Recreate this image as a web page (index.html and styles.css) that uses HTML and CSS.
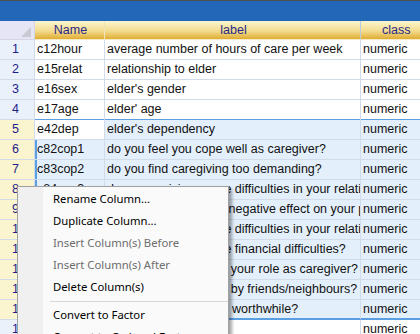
FILE: index.html
```html
<!DOCTYPE html>
<html>
<head>
<meta charset="utf-8">
<link rel="stylesheet" href="styles.css">
</head>
<body>
<div class="topbar"></div>
<div class="sheet">
  <div class="row head">
    <div class="cell num corner"><span class="tri"></span></div>
    <div class="cell name">Name</div>
    <div class="cell label">label</div>
    <div class="cell cls">class</div>
  </div>
  <div class="row"><div class="cell num">1</div><div class="cell name">c12hour</div><div class="cell label">average number of hours of care per week</div><div class="cell cls">numeric</div></div>
  <div class="row"><div class="cell num">2</div><div class="cell name">e15relat</div><div class="cell label">relationship to elder</div><div class="cell cls">numeric</div></div>
  <div class="row"><div class="cell num">3</div><div class="cell name">e16sex</div><div class="cell label">elder's gender</div><div class="cell cls">numeric</div></div>
  <div class="row"><div class="cell num">4</div><div class="cell name">e17age</div><div class="cell label">elder' age</div><div class="cell cls">numeric</div></div>
  <div class="row sel first"><div class="cell num">5</div><div class="cell name active">e42dep</div><div class="cell label">elder's dependency</div><div class="cell cls">numeric</div></div>
  <div class="row sel"><div class="cell num">6</div><div class="cell name">c82cop1</div><div class="cell label">do you feel you cope well as caregiver?</div><div class="cell cls">numeric</div></div>
  <div class="row sel"><div class="cell num">7</div><div class="cell name">c83cop2</div><div class="cell label">do you find caregiving too demanding?</div><div class="cell cls">numeric</div></div>
  <div class="row sel"><div class="cell num">8</div><div class="cell name">c84cop3</div><div class="cell label">does caregiving cause difficulties in your relationship with your friends?</div><div class="cell cls">numeric</div></div>
  <div class="row sel"><div class="cell num">9</div><div class="cell name">c85cop4</div><div class="cell label">does caregiving have negative effect on your physical health?</div><div class="cell cls">numeric</div></div>
  <div class="row sel"><div class="cell num">10</div><div class="cell name">c86cop5</div><div class="cell label">does caregiving cause difficulties in your relationship with your family?</div><div class="cell cls">numeric</div></div>
  <div class="row sel"><div class="cell num">11</div><div class="cell name">c87cop6</div><div class="cell label">does caregiving cause financial difficulties?</div><div class="cell cls">numeric</div></div>
  <div class="row sel"><div class="cell num">12</div><div class="cell name">c88cop7</div><div class="cell label">do you feel trapped in your role as caregiver?</div><div class="cell cls">numeric</div></div>
  <div class="row sel"><div class="cell num">13</div><div class="cell name">c89cop8</div><div class="cell label">do you feel supported by friends/neighbours?</div><div class="cell cls">numeric</div></div>
  <div class="row sel last"><div class="cell num">14</div><div class="cell name">c90cop9</div><div class="cell label">do you feel caregiving worthwhile?</div><div class="cell cls">numeric</div></div>
  <div class="row"><div class="cell num">15</div><div class="cell name">c160age</div><div class="cell label">carer' age</div><div class="cell cls">numeric</div></div>
</div>

<div class="menu">
  <div class="item">Rename Column...</div>
  <div class="item">Duplicate Column...</div>
  <div class="item off">Insert Column(s) Before</div>
  <div class="item off">Insert Column(s) After</div>
  <div class="item">Delete Column(s)</div>
  <div class="sep"></div>
  <div class="item">Convert to Factor</div>
  <div class="item">Convert to Ordered Factor</div>
</div>
</body>
</html>
```

FILE: styles.css
```css
body {
  margin: 0;
  background: #ffffff;
  font-family: "Liberation Sans", Arial, sans-serif;
  font-size: 12.5px;
  overflow: hidden;
  border-top: 1px solid #505050;
}

.topbar {
  height: 20px;
  background: #2368b8;
}

.sheet {
  width: 440px;
}

.row {
  display: flex;
  height: 20px;
}

.cell {
  box-sizing: border-box;
  height: 20px;
  line-height: 19px;
  border-bottom: 1px solid #d2dbe9;
  border-right: 1px solid #d2dbe9;
  white-space: nowrap;
  overflow: hidden;
  color: #111111;
  flex: none;
}

.num {
  width: 35px;
  padding-left: 12px;
  background: #ebf1fb;
  color: #1d1d8a;
}

.name {
  width: 70px;
  padding-left: 2px;
}

.label {
  width: 256px;
  padding-left: 2px;
}

.cls {
  width: 79px;
  padding-left: 2px;
}

/* header */
.head {
  height: 19px;
}

.head .cell {
  height: 19px;
  line-height: 18px;
  background: linear-gradient(to bottom, #fcf5cf, #f3dc8e 55%, #e0ad33);
  color: #2a2a8a;
  text-align: center;
  border-bottom: 1px solid #f4e9c8;
  border-right: 1px solid #f0e4b8;
}

.head .label {
  border-right: 1px solid #b8cbe4;
}

.head .cls {
  text-align: left;
  padding-left: 21px;
}

.head .corner {
  position: relative;
  background: #e5e5f5;
  border-right: 1px solid #d5d5e5;
  border-bottom: 1px solid #d5d5e5;
}

.tri {
  position: absolute;
  right: 3px;
  bottom: 2px;
  width: 0;
  height: 0;
  border-left: 10px solid transparent;
  border-bottom: 10px solid #c9c9d4;
}

/* selection */
.sel .cell {
  background: #e3effb;
}

.sel .num {
  background: #fbf5cf;
}

.sel .active {
  background: #ffffff;
}

.sel .name {
  box-shadow: inset 2px 0 0 #5b9fe3;
}

.row.first {
  margin-top: -1px;
  height: 21px;
}

.first .cell {
  height: 21px;
  line-height: 21px;
}

.first .cell:not(.num) {
  box-shadow: inset 0 1px 0 #5b9fe3;
}

.first .name {
  box-shadow: inset 2px 1px 0 #5b9fe3;
}

.first .num {
  box-shadow: inset 0 1px 0 #d2dbe9;
}

.last .cell:not(.num) {
  border-bottom: 2px solid #5b9fe3;
  line-height: 18px;
}

/* context menu */
.menu {
  position: absolute;
  left: 17px;
  top: 186px;
  width: 212px;
  height: 170px;
  box-sizing: border-box;
  border: 1px solid #a0a0a0;
  background: linear-gradient(to right, #f0f0f0 25px, #fafafa 25px);
  box-shadow: 3px 3px 3px rgba(0, 0, 0, 0.35);
  padding-top: 1px;
  font-family: "Noto Sans", "Liberation Sans", sans-serif;
  font-size: 11.3px;
}

.item {
  height: 22px;
  line-height: 22px;
  padding-left: 35px;
  color: #000000;
}

.item.off {
  color: #6d6d6d;
}

.sep {
  height: 1px;
  margin: 3px 0 2px 32px;
  background: #d7d7d7;
}
```
